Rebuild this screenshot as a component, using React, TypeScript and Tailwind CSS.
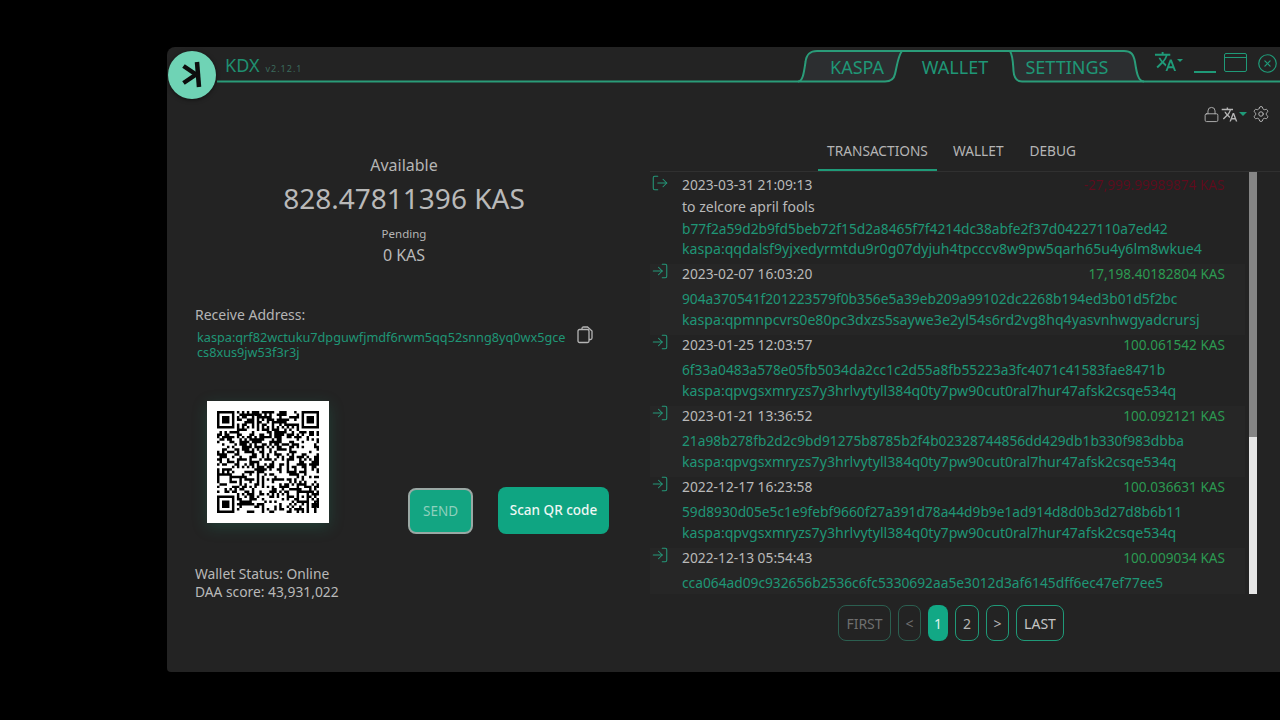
import React from "react";
import { Lock, LogIn, LogOut, Settings, CircleX } from "lucide-react";
import { MdTranslate } from "react-icons/md";

function qrMatrix(text: string, mask: number): boolean[][] {
  const size = 41;
  const bytes = Array.from(text).map((c) => c.charCodeAt(0));
  const bits: number[] = [];
  const push = (v: number, n: number) => { for (let i = n - 1; i >= 0; i--) bits.push((v >> i) & 1); };
  push(4, 4); push(bytes.length, 8); bytes.forEach((b) => push(b, 8));
  push(0, Math.min(4, 76 * 8 - bits.length));
  while (bits.length % 8) bits.push(0);
  const data: number[] = [];
  for (let i = 0; i < bits.length; i += 8) data.push(parseInt(bits.slice(i, i + 8).join(""), 2));
  for (let p = 0xec; data.length < 76; p ^= 0xec ^ 0x11) data.push(p);
  const mul = (a: number, b: number) => { let r = 0; for (let i = 7; i >= 0; i--) { r = (r << 1) ^ ((r >> 7) * 0x11d); r ^= ((b >> i) & 1) * a; } return r; };
  const gen: number[] = new Array(24).fill(0); gen[23] = 1; let root = 1;
  for (let i = 0; i < 24; i++) { for (let j = 0; j < 24; j++) { gen[j] = mul(gen[j], root); if (j + 1 < 24) gen[j] ^= gen[j + 1]; } root = mul(root, 2); }
  const blocks: number[][] = []; const ecs: number[][] = [];
  for (let b = 0; b < 4; b++) { const d = data.slice(b * 19, b * 19 + 19); const ec: number[] = new Array(24).fill(0);
    d.forEach((v) => { const f = v ^ (ec.shift() as number); ec.push(0); gen.forEach((g, i) => (ec[i] ^= mul(g, f))); }); blocks.push(d); ecs.push(ec); }
  const all: number[] = [];
  for (let i = 0; i < 19; i++) blocks.forEach((b) => all.push(b[i]));
  for (let i = 0; i < 24; i++) ecs.forEach((e) => all.push(e[i]));
  const m: boolean[][] = Array.from({ length: size }, () => new Array(size).fill(false));
  const fn: boolean[][] = Array.from({ length: size }, () => new Array(size).fill(false));
  const set = (x: number, y: number, v: boolean) => { m[y][x] = v; fn[y][x] = true; };
  for (let i = 0; i < size; i++) { set(6, i, i % 2 === 0); set(i, 6, i % 2 === 0); }
  const finder = (cx: number, cy: number) => { for (let dy = -4; dy <= 4; dy++) for (let dx = -4; dx <= 4; dx++) { const x = cx + dx, y = cy + dy; const d = Math.max(Math.abs(dx), Math.abs(dy)); if (x >= 0 && x < size && y >= 0 && y < size) set(x, y, d !== 2 && d !== 4); } };
  finder(3, 3); finder(size - 4, 3); finder(3, size - 4);
  for (let dy = -2; dy <= 2; dy++) for (let dx = -2; dx <= 2; dx++) set(34 + dx, 34 + dy, Math.max(Math.abs(dx), Math.abs(dy)) !== 1);
  const d = (3 << 3) | mask; let rem = d;
  for (let i = 0; i < 10; i++) rem = (rem << 1) ^ ((rem >> 9) * 0x537);
  const f = ((d << 10) | rem) ^ 0x5412; const bit = (i: number) => ((f >> i) & 1) === 1;
  for (let i = 0; i <= 5; i++) set(8, i, bit(i));
  set(8, 7, bit(6)); set(8, 8, bit(7)); set(7, 8, bit(8));
  for (let i = 9; i < 15; i++) set(14 - i, 8, bit(i));
  for (let i = 0; i < 8; i++) set(size - 1 - i, 8, bit(i));
  for (let i = 8; i < 15; i++) set(8, size - 15 + i, bit(i));
  set(8, size - 8, true);
  let idx = 0;
  for (let right = size - 1; right >= 1; right -= 2) { if (right === 6) right = 5;
    for (let v = 0; v < size; v++) for (let j = 0; j < 2; j++) { const x = right - j; const y = ((right + 1) & 2) === 0 ? size - 1 - v : v;
      if (!fn[y][x] && idx < all.length * 8) { m[y][x] = ((all[idx >> 3] >> (7 - (idx & 7))) & 1) === 1; idx++; } } }
  for (let y = 0; y < size; y++) for (let x = 0; x < size; x++) { if (fn[y][x]) continue; const p = x * y;
    const c = [(x + y) % 2, y % 2, x % 3, (x + y) % 3, (Math.floor(x / 3) + Math.floor(y / 2)) % 2, (p % 2) + (p % 3), ((p % 2) + (p % 3)) % 2, (((x + y) % 2) + (p % 3)) % 2][mask];
    if (c === 0) m[y][x] = !m[y][x]; }
  return m;
}

function QR() {
  const m = qrMatrix("kaspa:qrf82wctuku7dpguwfjmdf6rwm5qq52snng8yq0wx5gcecs8xus9jw53f3r3j", 7);
  let d = "";
  m.forEach((r, y) => r.forEach((v, x) => { if (v) d += `M${x} ${y}h1v1h-1z`; }));
  return (
    <svg viewBox="0 0 41 41" className="w-[102px] h-[102px]">
      <path d={d} fill="#000" />
    </svg>
  );
}

function TabsOutline() {
  return (
    <svg className="absolute left-0 top-0 pointer-events-none" width="1113" height="38" viewBox="167 47 1113 38" fill="none">
      <path d="M790 81.5H798C803 81.5 804 72 805.5 62C806.5 54 810 51 817 51H902C898 56 897 66 895 74C894 79 891 81.5 885 81.5H790Z" fill="#2c2e30" />
      <path d="M1010 51H1124C1131 51 1133.5 54 1135 62C1136.5 72 1138 81.5 1144 81.5H1022C1016 81.5 1014 77 1013.5 71C1013 63 1013 56 1010 51Z" fill="#2c2e30" />
      <path d="M217 81.5H798C803 81.5 804 72 805.5 62C806.5 54 810 51 817 51H1124C1131 51 1133.5 54 1135 62C1136.5 72 1138 81.5 1144 81.5H1280" stroke="#2a9c79" strokeWidth="2" />
      <path d="M902 51C898 56 897 66 895 74C894 79 891 81.5 885 81.5H798" stroke="#2a9c79" strokeWidth="2" />
      <path d="M1010 51C1013 56 1013 63 1013.5 71C1014 77 1016 81.5 1022 81.5H1144" stroke="#2a9c79" strokeWidth="2" />
    </svg>
  );
}

type Tx = { date: string; amount: string; hash: string; addr?: string };
const A3 = "kaspa:qpvgsxmryzs7y3hrlvytyll384q0ty7pw90cut0ral7hur47afsk2csqe534q";
const txs: Tx[] = [
  { date: "2023-02-07 16:03:20", amount: "17,198.40182804 KAS", hash: "904a370541f201223579f0b356e5a39eb209a99102dc2268b194ed3b01d5f2bc", addr: "kaspa:qpmnpcvrs0e80pc3dxzs5saywe3e2yl54s6rd2vg8hq4yasvnhwgyadcrursj" },
  { date: "2023-01-25 12:03:57", amount: "100.061542 KAS", hash: "6f33a0483a578e05fb5034da2cc1c2d55a8fb55223a3fc4071c41583fae8471b", addr: A3 },
  { date: "2023-01-21 13:36:52", amount: "100.092121 KAS", hash: "21a98b278fb2d2c9bd91275b8785b2f4b02328744856dd429db1b330f983dbba", addr: A3 },
  { date: "2022-12-17 16:23:58", amount: "100.036631 KAS", hash: "59d8930d05e5c1e9febf9660f27a391d78a44d9b9e1ad914d8d0b3d27d8b6b11", addr: A3 },
  { date: "2022-12-13 05:54:43", amount: "100.009034 KAS", hash: "cca064ad09c932656b2536c6fc5330692aa5e3012d3af6145dff6ec47ef77ee5" },
];

function Row({ t, odd }: { t: Tx; odd: boolean }) {
  return (
    <div className={`flex h-[71px] pr-5 ${odd ? "bg-[#262626]" : ""}`}>
      <div className="w-8 pl-[1px] -mt-[2px] shrink-0 text-[#24997a]">
        <LogIn size={18} strokeWidth={1.4} />
      </div>
      <div className="flex-1 min-w-0">
        <div className="flex justify-between h-[20px] leading-[20px]">
          <span className="text-[13.8px] text-[#b9b9b9]">{t.date}</span>
          <span className="text-[13.6px] text-[#2c9a52]">{t.amount}</span>
        </div>
        <div className="mt-[4px] h-[21px] leading-[21px] text-[13.75px] text-[#1f9676] whitespace-nowrap">{t.hash}</div>
        {t.addr && <div className="h-[22px] leading-[22px] text-[14.15px] text-[#1f9676] whitespace-nowrap">{t.addr}</div>}
      </div>
    </div>
  );
}

function PageBtn({ label, cls }: { label: string; cls: string }) {
  return <div className={`h-[36px] flex items-center justify-center rounded-[8px] text-[14px] ${cls}`}>{label}</div>;
}

export default function App() {
  return (
    <div className="h-[720px] w-[1280px] overflow-hidden bg-black pl-[167px] pt-[47px] font-['Noto_Sans',sans-serif]">
      <div className="relative w-[1113px] h-[625px] rounded-tl-[8px] rounded-bl-[4px] bg-[#232323] flex flex-col overflow-hidden">
        <div className="relative h-[36px] shrink-0 flex">
          <TabsOutline />
          <div className="relative pl-[58px] pt-[6px] flex items-baseline gap-[6px] h-[30px]">
            <span className="text-[#1f8f70] text-[18px] leading-[24px]">KDX</span>
            <span className="text-[#3b6a5c] text-[9px] tracking-[1px]">v2.12.1</span>
          </div>
          <div className="relative ml-auto flex h-[36px] pt-[7px] pr-[2px]">
            <div className="w-[104px] text-center text-[18px] leading-[26px] text-[#1f9676]">KASPA</div>
            <div className="w-[92px] text-center text-[18px] leading-[26px] text-[#1f9676]">WALLET</div>
            <div className="w-[132px] text-center text-[18px] leading-[26px] text-[#1f9676]">SETTINGS</div>
            <div className="ml-[21px] -mt-[4px] flex items-start text-[#1f9a78] w-[30px]">
              <MdTranslate size={23} />
              <span className="w-0 h-0 mt-[9px] border-x-[3px] border-x-transparent border-t-[3px] border-t-[#1f9a78]" />
            </div>
            <div className="ml-[10px] w-[22px] h-[1.5px] bg-[#1f9a78] mt-[17px]" />
            <div className="ml-[8px] -mt-[1px] w-[23px] h-[19px] rounded-[2px] border-[1.5px] border-[#1f9a78] flex flex-col">
              <div className="h-[4px] border-b-[1.5px] border-[#1f9a78]" />
            </div>
            <div className="ml-[10px] -mt-[1px] w-[21px] text-[#1f9a78]">
              <CircleX size={21} strokeWidth={1.4} />
            </div>
          </div>
        </div>
        <div className="absolute left-[1px] top-[4px] w-[48px] h-[48px] rounded-full bg-[#6fd3b5] flex items-center justify-center shadow-[0_1px_4px_rgba(0,0,0,0.5)]">
          <svg width="48" height="48" viewBox="0 0 48 48" fill="none" stroke="#0d0d0d" strokeWidth="4.5">
            <path d="M29 11L31 36" />
            <path d="M15.5 15L28 23.5L15.5 32" />
          </svg>
        </div>
        <div className="flex-1 flex min-h-0">
          <div className="w-[483px] shrink-0 pl-[28px] pr-[37px] text-[#bdbdbd] flex flex-col">
            <div className="mt-[70px] h-[24px] leading-[24px] text-center text-[16px] text-[#b5b5b5]">Available</div>
            <div className="mt-[1px] h-[40px] leading-[40px] text-center text-[28px] text-[#b9b9b9]">828.47811396 KAS</div>
            <div className="mt-[6px] h-[20px] leading-[20px] text-center text-[11.5px] text-[#b5b5b5]">Pending</div>
            <div className="-mt-[1px] h-[24px] leading-[24px] text-center text-[16px] text-[#b9b9b9]">0 KAS</div>
            <div className="mt-[36px] h-[24px] leading-[24px] text-[14px] text-[#b5b5b5]">Receive Address:</div>
            <div className="flex -mt-[1px] ml-[2px] h-[36px]">
              <div className="w-[372px] text-[12.7px] leading-[15px] pt-[4px] text-[#1f9676] break-all">
                kaspa:qrf82wctuku7dpguwfjmdf6rwm5qq52snng8yq0wx5gcecs8xus9jw53f3r3j
              </div>
              <svg className="ml-[8px]" width="16" height="18" viewBox="0 0 16 18" fill="none" stroke="#b5b5b5" strokeWidth="1.3">
                <path d="M5 3.5V2.5C5 1.5 5.5 1 6.5 1H10.5L15 5V12C15 13 14.5 13.5 13.5 13.5H12" />
                <rect x="1" y="3.5" width="11" height="13" rx="1.5" />
              </svg>
            </div>
            <div className="mt-[39px] flex items-end">
              <div className="ml-[12px] w-[122px] h-[122px] bg-white flex items-center justify-center shadow-[0_4px_14px_rgba(30,150,115,0.25)]">
                <QR />
              </div>
              <div className="ml-[79px] mb-[-11px] w-[65px] h-[46px] rounded-[8px] border-2 border-[#9aa8a4] bg-[#13a582] flex items-center justify-center text-[13.5px] text-[#8fd0bd]">SEND</div>
              <div className="ml-[25px] mb-[-11px] w-[111px] h-[47px] rounded-[8px] bg-[#0fa582] flex items-center justify-center text-[13.5px] font-medium text-[#eef7f4]">Scan QR code</div>
            </div>
            <div className="mt-[42px] text-[13.8px] leading-[18px] text-[#b9b9b9]">
              <div>Wallet Status: Online</div>
              <div>DAA score: 43,931,022</div>
            </div>
          </div>
          <div className="flex-1 min-w-0 flex flex-col">
            <div className="h-[26px] mt-[18px] flex items-center justify-end pr-[10px] text-[#b5b5b5]">
              <Lock size={17} strokeWidth={1.3} />
              <div className="flex items-center ml-[1px]">
                <MdTranslate size={17} />
                <span className="w-0 h-0 ml-[1px] border-x-[4px] border-x-transparent border-t-[4px] border-t-[#1f9a78]" />
              </div>
              <Settings size={18} strokeWidth={1.3} className="ml-[5px]" />
            </div>
            <div className="flex mt-[3px] h-[42px] ml-[168px] text-[13.7px] text-[#b5b5b5] leading-[41px]">
              <div className="w-[119px] text-center border-b-2 border-[#1f9a78] h-[41px]">TRANSACTIONS</div>
              <div className="ml-[16px]">WALLET</div>
              <div className="ml-[26px]">DEBUG</div>
            </div>
            <div className="flex h-[423px] border-t border-[#303030] -mt-[1px]">
              <div className="w-[595px] shrink-0 overflow-hidden">
                <div className="flex h-[92px] pr-5 pt-[2px]">
                  <div className="w-8 pl-[1px] shrink-0 text-[#24997a]">
                    <LogOut size={18} strokeWidth={1.4} />
                  </div>
                  <div className="flex-1 min-w-0">
                    <div className="flex justify-between h-[21px] leading-[21px]">
                      <span className="text-[13.8px] text-[#b9b9b9]">2023-03-31 21:09:13</span>
                      <span className="text-[13.6px] text-[#5f0d1e] blur-[0.6px]">-27,999.99989874 KAS</span>
                    </div>
                    <div className="mt-[1px] h-[22px] leading-[22px] text-[14px] text-[#b9b9b9]">to zelcore april fools</div>
                    <div className="h-[21px] leading-[21px] text-[13.75px] text-[#1f9676] whitespace-nowrap">b77f2a59d2b9fd5beb72f15d2a8465f7f4214dc38abfe2f37d04227110a7ed42</div>
                    <div className="h-[20px] leading-[20px] text-[14.15px] text-[#1f9676] whitespace-nowrap">kaspa:qqdalsf9yjxedyrmtdu9r0g07dyjuh4tpcccv8w9pw5qarh65u4y6lm8wkue4</div>
                  </div>
                </div>
                {txs.map((t, i) => (
                  <Row key={t.hash} t={t} odd={i % 2 === 0} />
                ))}
              </div>
              <div className="ml-[4px] w-[8px] h-[422px] bg-[#e6e6e6]">
                <div className="h-[265px] bg-[#858585]" />
              </div>
            </div>
            <div className="mt-[11px] ml-[188px] flex gap-[7px]">
              <PageBtn label="FIRST" cls="w-[53px] border-[1.5px] border-[#2b5f50] text-[#6f6f6f]" />
              <PageBtn label="<" cls="w-[23px] border-[1.5px] border-[#2b5f50] text-[#6f6f6f]" />
              <PageBtn label="1" cls="w-[20px] bg-[#12a885] text-[#dff3ee]" />
              <PageBtn label="2" cls="w-[24px] border-[1.5px] border-[#1f9a78] text-[#b5b5b5]" />
              <PageBtn label=">" cls="w-[23px] border-[1.5px] border-[#1f9a78] text-[#b5b5b5]" />
              <PageBtn label="LAST" cls="w-[48px] border-[1.5px] border-[#1f9a78] text-[#c5c5c5]" />
            </div>
          </div>
        </div>
      </div>
    </div>
  );
}
